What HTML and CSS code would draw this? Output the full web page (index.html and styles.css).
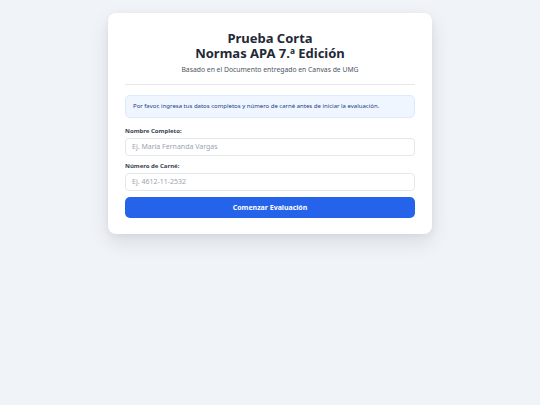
FILE: index.html
```html
<!DOCTYPE html>
<html lang="es">
<head>
<meta charset="utf-8">
<link rel="stylesheet" href="styles.css">
</head>
<body>
<div class="page">
  <div class="card">
    <h1 class="title"><span class="title-line">Prueba Corta</span><span class="title-line">Normas APA 7.ª Edición</span></h1>
    <p class="subtitle">Basado en el Documento entregado en Canvas de UMG</p>
    <hr class="divider">
    <div class="notice">Por favor, ingresa tus datos completos y número de carné antes de iniciar la evaluación.</div>
    <label class="label" for="nombre">Nombre Completo:</label>
    <input class="input" id="nombre" type="text" placeholder="Ej. María Fernanda Vargas">
    <label class="label" for="carne">Número de Carné:</label>
    <input class="input" id="carne" type="text" placeholder="Ej. 4612-11-2532">
    <button class="button" type="button">Comenzar Evaluación</button>
  </div>
</div>
</body>
</html>
```

FILE: styles.css
```css
html, body {
  margin: 0;
  padding: 0;
}
body {
  background: #f0f4f8;
  font-family: "Noto Sans", "Open Sans", sans-serif;
  color: #1f2937;
  width: 540px;
  height: 405px;
}
.page {
  display: flex;
  justify-content: center;
  padding-top: 13px;
}
.card {
  width: 324px;
  box-sizing: border-box;
  background: #ffffff;
  border-radius: 8px;
  padding: 17px 17px 16px;
  box-shadow: 0 8px 20px rgba(15, 23, 42, 0.10), 0 2px 6px rgba(15, 23, 42, 0.05);
  display: flex;
  flex-direction: column;
}
.title {
  margin: 0.5px 0 0;
  text-align: center;
  font-size: 13px;
  line-height: 15px;
  font-weight: 700;
  color: #1f2937;
}
.title-line {
  display: block;
}
.subtitle {
  margin: 4.5px 0 0;
  text-align: center;
  font-size: 6.8px;
  line-height: 10px;
  color: #4b5563;
}
.divider {
  border: 0;
  border-top: 1px solid #e5e7eb;
  margin: 9px 0 10px;
  width: 100%;
}
.notice {
  background: #eff6ff;
  border: 1px solid #dbeafe;
  border-radius: 5px;
  color: #1e3a8a;
  font-size: 6px;
  line-height: 9px;
  padding: 6px 7px;
  margin-bottom: 9px;
}
.label {
  font-size: 6px;
  line-height: 9px;
  font-weight: 700;
  color: #374151;
  margin-bottom: 1.5px;
}
.input {
  box-sizing: border-box;
  height: 18.5px;
  width: 100%;
  border: 1px solid #e5e7eb;
  border-radius: 4px;
  padding: 0 6px;
  font-family: inherit;
  font-size: 7px;
  color: #111827;
  background: #fff;
  margin: 0 0 6px;
  outline: none;
}
.input::placeholder {
  color: #9ca3af;
}
.button {
  margin-top: 0;
  height: 20.5px;
  border: 0;
  border-radius: 5px;
  background: #2563eb;
  color: #ffffff;
  font-family: inherit;
  font-size: 7px;
  font-weight: 700;
}
```
